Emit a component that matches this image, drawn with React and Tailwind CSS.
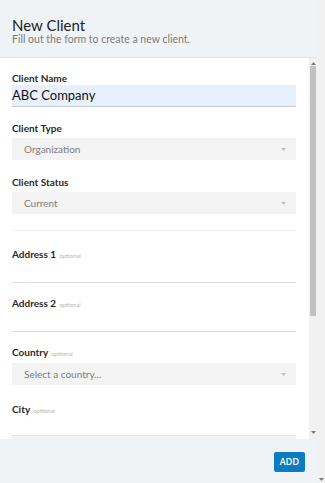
import React from 'react';

const Caret = () => (
  <svg width="5" height="3" viewBox="0 0 5 3" className="text-[#c0c0c0]">
    <path d="M0 0 L5 0 L2.5 3 Z" fill="currentColor" />
  </svg>
);

const Arrow = ({ up }) => (
  <svg width="5" height="3" viewBox="0 0 5 3" className="text-[#7a7a7a]">
    <path d={up ? 'M0 3 L5 3 L2.5 0 Z' : 'M0 0 L5 0 L2.5 3 Z'} fill="currentColor" />
  </svg>
);

const Label = ({ text, optional, className = '' }) => (
  <div className={`h-[14px] flex items-center gap-[3px] ${className}`}>
    <span className="text-[10px] font-bold text-[#2a2a2a]">{text}</span>
    {optional && <span className="text-[6px] text-[#b5b5b5] mt-[2px]">optional</span>}
  </div>
);

const Select = ({ value, className = '' }) => (
  <div className={`h-[22px] bg-[#f3f3f3] flex items-center justify-between pl-3 pr-[10px] ${className}`}>
    <span className="text-[10px] text-[#7d7d7d]">{value}</span>
    <Caret />
  </div>
);

const LineInput = ({ className = '' }) => (
  <div className={`h-[22px] border-b border-[#dcdcdc] ${className}`} />
);

export default function App() {
  return (
    <div className="flex w-[325px] h-[483px] bg-[#f1f1f1] overflow-hidden" style={{ fontFamily: 'Lato, "Open Sans", sans-serif' }}>
      <div className="flex flex-col w-[317px] h-full">
        <div className="h-[58px] shrink-0 bg-[#f0f3f5] border-b border-[#dde3e8] px-3 pt-[18px]">
          <div className="text-[15px] leading-[14px] text-[#222]">New Client</div>
          <div className="text-[10.5px] leading-[12px] text-[#7b7b7b] mt-[1px]">Fill out the form to create a new client.</div>
        </div>

        <div className="flex-1 flex bg-white overflow-hidden">
          <div className="flex-1 px-3 pt-[13px] pr-[13px]">
            <Label text="Client Name" />
            <div className="h-[22px] bg-[#e8f0fe] border-b border-[#c4ccd6] flex items-center">
              <span className="text-[13px] text-[#111]">ABC Company</span>
            </div>

            <Label text="Client Type" className="mt-[14px]" />
            <Select value="Organization" className="mt-[3px]" />

            <Label text="Client Status" className="mt-[15px]" />
            <Select value="Current" className="mt-[3px]" />

            <div className="mt-[16px] border-t border-[#f0f0f0]" />

            <Label text="Address 1" optional className="mt-[16px]" />
            <LineInput />

            <Label text="Address 2" optional className="mt-[13px]" />
            <LineInput />

            <Label text="Country" optional className="mt-[13px]" />
            <Select value="Select a country..." className="mt-[4px]" />

            <Label text="City" optional className="mt-[17px]" />
            <div className="mt-[19px] h-[22px] bg-[#f3f3f3] border-t border-[#e2e2e2]" />
          </div>

          <div className="w-[8px] shrink-0 bg-[#f1f1f1] flex flex-col items-center">
            <div className="h-[7px] flex items-end"><Arrow up /></div>
            <div className="mt-[1px] h-[250px] w-[6px] bg-[#c1c1c1]" />
            <div className="flex-1" />
            <div className="h-[8px] flex items-start"><Arrow /></div>
          </div>
        </div>

        <div className="h-[44px] shrink-0 bg-[#f0f3f5] flex items-center justify-end pr-3">
          <button className="w-[31px] h-[20px] rounded-[2px] bg-[#0b7cbf] text-white text-[8.5px] font-bold tracking-[0.3px] mt-[2px]">ADD</button>
        </div>
      </div>

      <div className="w-[8px] flex flex-col justify-end items-center pb-[2px]">
        <Arrow />
      </div>
    </div>
  );
}
